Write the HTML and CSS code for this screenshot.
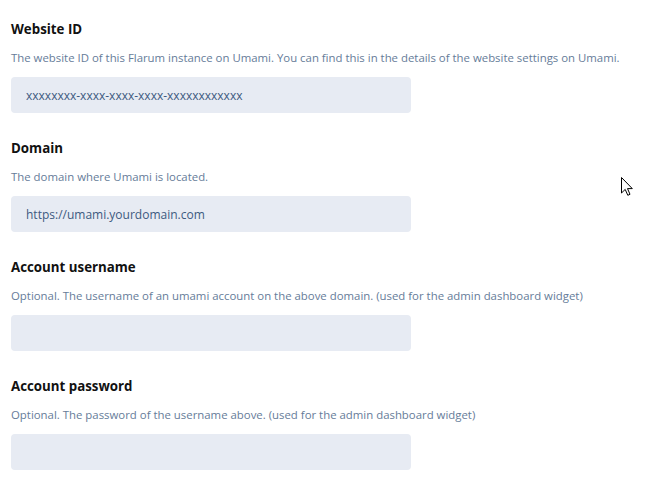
FILE: index.html
```html
<!DOCTYPE html>
<html lang="en">
<head>
    <meta charset="UTF-8">
    <title>Umami settings</title>
    <link rel="stylesheet" href="styles.css">
</head>
<body>
    <form class="settings">
        <div class="field">
            <label for="website-id">Website ID</label>
            <p class="help">The website ID of this Flarum instance on Umami. You can find this in the details of the website settings on Umami.</p>
            <input type="text" id="website-id" placeholder="xxxxxxxx-xxxx-xxxx-xxxx-xxxxxxxxxxxx">
        </div>

        <div class="field">
            <label for="domain">Domain</label>
            <p class="help">The domain where Umami is located.</p>
            <input type="text" id="domain" placeholder="https://umami.yourdomain.com">
        </div>

        <div class="field">
            <label for="username">Account username</label>
            <p class="help">Optional. The username of an umami account on the above domain. (used for the admin dashboard widget)</p>
            <input type="text" id="username">
        </div>

        <div class="field">
            <label for="password">Account password</label>
            <p class="help">Optional. The password of the username above. (used for the admin dashboard widget)</p>
            <input type="password" id="password">
        </div>
    </form>

    <svg class="cursor" width="12" height="19" viewBox="0 0 12 19">
        <path d="M0.5 0.5 L0.5 16 L4.2 12.4 L6.8 18.3 L9 17.3 L6.5 11.6 L11.3 11.6 Z" fill="#fff" stroke="#000" stroke-width="1" stroke-linejoin="miter"/>
    </svg>
</body>
</html>
```

FILE: styles.css
```css
body {
    margin: 0;
    padding: 0 11px;
    background: #fff;
    font-family: "Open Sans", "Noto Sans", sans-serif;
    color: #111;
}
.settings {
    padding-top: 19px;
}
.field {
    margin-bottom: 25px;
}
label {
    display: block;
    font-weight: bold;
    font-size: 13.3px;
    line-height: 20px;
}
.help {
    margin: 11px 0;
    font-size: 11.4px;
    line-height: 16px;
    color: #667c99;
}
input {
    display: block;
    width: 400px;
    height: 36px;
    padding: 8px 15px;
    border: none;
    border-radius: 4px;
    background: #e7ebf3;
    box-sizing: border-box;
    font-family: inherit;
    font-size: 12px;
    color: #3d4a5c;
}
input::placeholder {
    color: #3d5a80;
}
/* mouse pointer caught in the screenshot */
.cursor {
    position: absolute;
    left: 621px;
    top: 177px;
}
```
